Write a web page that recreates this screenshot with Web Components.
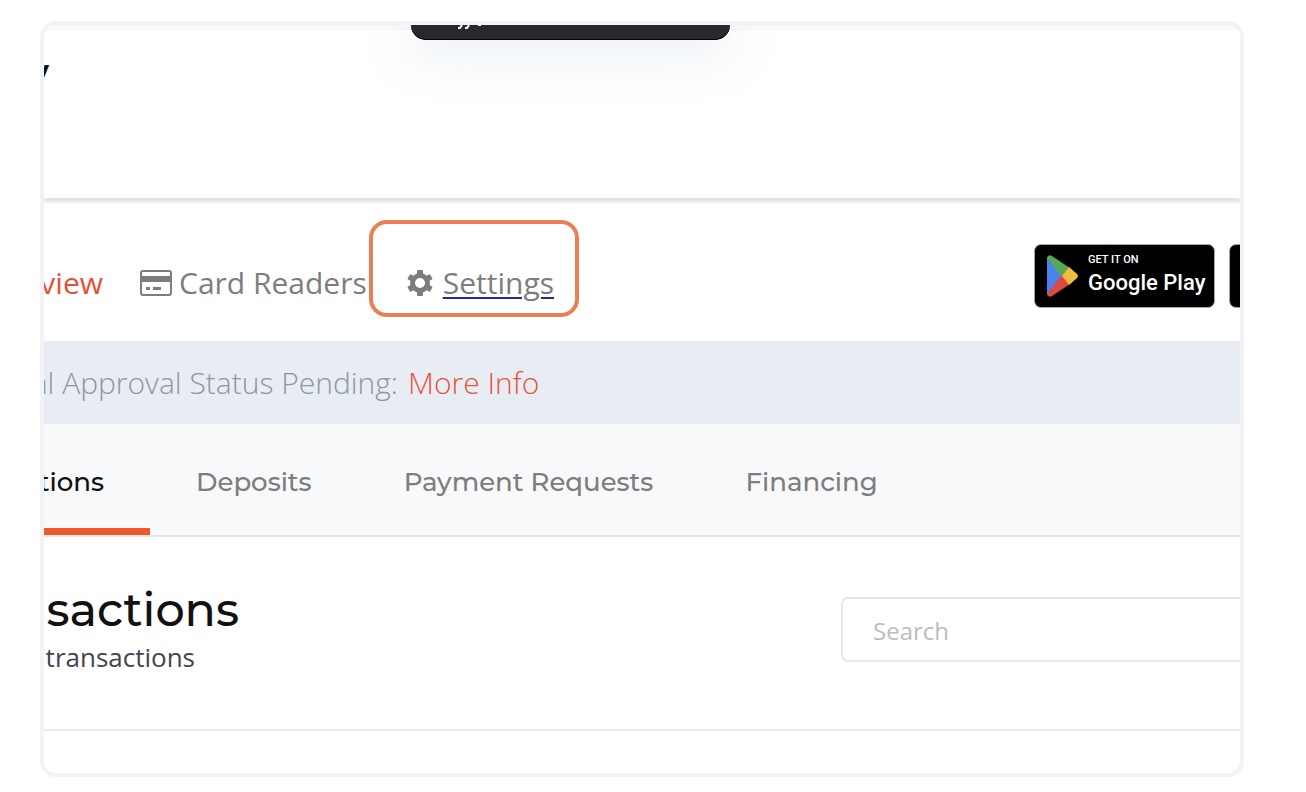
<!DOCTYPE html>
<html lang="en">
<head>
<meta charset="utf-8">
<meta name="viewport" content="width=device-width, initial-scale=1">
<title>Transactions</title>
<style>
    body {
        margin: 0;
        background: #fff;
        font-family: "Open Sans", "Noto Sans", sans-serif;
        --heading-font: Montserrat, Inter, sans-serif;
        --accent: #f0592a;
    }
</style>
</head>
<body>
<screen-frame>
    <top-header></top-header>
    <account-nav></account-nav>
    <status-notice href="#info" link="More Info">al Approval Status Pending:</status-notice>
    <tab-bar></tab-bar>
    <list-heading>
        <span slot="title">sactions</span>
        <span slot="text">transactions</span>
    </list-heading>
</screen-frame>

<script>
class ScreenFrame extends HTMLElement {
    constructor() {
        super()
        this.attachShadow({mode: 'open'})
        this.shadowRoot.innerHTML = /*html*/`
            <style>
                :host {
                    display: block;
                    padding: 21px 62px 15px 40px;
                }
                .frame {
                    border: 4px solid #f3f2f7;
                    border-radius: 16px;
                    overflow: hidden;
                    background: #fff;
                }
            </style>
            <main class="frame"><slot></slot></main>
        `
    }
}

class TopHeader extends HTMLElement {
    constructor() {
        super()
        this.attachShadow({mode: 'open'})
        this.shadowRoot.innerHTML = /*html*/`
            <style>
                :host {
                    display: block;
                    position: relative;
                    box-sizing: border-box;
                    height: 173px;
                    margin-bottom: 6px;
                    border-top: 5px solid #f8f9fc;
                    box-shadow: 0 4px 3px #e2e2e2;
                }
                .name {
                    display: flex;
                    justify-content: flex-end;
                    width: 5px;
                    margin: 0;
                    padding-top: 24px;
                    font: 700 30px/36px var(--heading-font);
                    color: #111;
                }
                .toast {
                    position: absolute;
                    top: -5px;
                    left: 367px;
                    width: 319px;
                    height: 15px;
                    border-radius: 0 0 18px 18px;
                    background: #29282d;
                    box-shadow: 0 8px 48px 4px rgba(130, 165, 190, .25), inset 0 -1px 0 #000;
                }
                .toast svg {
                    display: block;
                    margin-left: 46px;
                }
            </style>
            <p class="name">y</p>
            <div class="toast">
                <svg width="28" height="4" fill="none" stroke="#fff" stroke-width="2">
                    <path d="M5 0L3 3H1M12 0L10 3H8M21 0H24"/>
                </svg>
            </div>
        `
    }
}

const icons = {
    card: /*html*/`
        <svg width="32" height="28" viewBox="0 0 32 28" aria-hidden="true">
            <rect x="1" y="2" width="30" height="24" rx="2" fill="none" stroke="#7d7d7d" stroke-width="2"/>
            <path fill="#7d7d7d" d="M1 7h30v6H1zM6 18h4v3H6zM13 18h8v3h-8z"/>
        </svg>`,
    gear: /*html*/`
        <svg width="32" height="28" viewBox="-16 -14 32 28" aria-hidden="true">
            <g fill="#7d7d7d">
                <rect x="-3" y="-13" width="6" height="26" rx="1"/>
                <rect x="-3" y="-13" width="6" height="26" rx="1" transform="rotate(60)"/>
                <rect x="-3" y="-13" width="6" height="26" rx="1" transform="rotate(120)"/>
                <circle r="10"/>
            </g>
            <circle r="5" fill="#fff"/>
        </svg>`
}

class NavItem extends HTMLElement {
    connectedCallback() {
        this.attachShadow({mode: 'open'})
        this.shadowRoot.innerHTML = /*html*/`
            <style>
                :host { display: block; }
                a {
                    display: flex;
                    position: relative;
                    align-items: center;
                    gap: 7px;
                    font-size: 30px;
                    line-height: 40px;
                    color: #7d7d7d;
                    text-decoration: none;
                    white-space: nowrap;
                }
                :host([active]) a { color: #e0523a; }
                :host([marked]) span {
                    text-decoration: underline 2px #1c2a9c;
                    text-underline-offset: 3px;
                }
                :host([marked]) a::after {
                    content: "";
                    position: absolute;
                    inset: -43px -25px -14px -35px;
                    border: 4px solid #e97f53;
                    border-radius: 18px;
                }
                svg { flex: none; }
            </style>
            <a href="#">${icons[this.getAttribute('icon')] || ''}<span><slot></slot></span></a>
        `
    }
}

class StoreBadge extends HTMLElement {
    constructor() {
        super()
        this.attachShadow({mode: 'open'})
        this.shadowRoot.innerHTML = /*html*/`
            <style>
                :host { display: block; }
                a {
                    display: flex;
                    align-items: center;
                    gap: 10px;
                    box-sizing: border-box;
                    width: 181px;
                    height: 64px;
                    padding-left: 12px;
                    border: 1px solid #a6a6a6;
                    border-radius: 7px;
                    background: #000;
                    color: #fff;
                    text-decoration: none;
                    white-space: nowrap;
                }
            </style>
            <a href="#"><slot></slot></a>
        `
    }
}

class AccountNav extends HTMLElement {
    constructor() {
        super()
        this.attachShadow({mode: 'open'})
        this.shadowRoot.innerHTML = /*html*/`
            <style>
                :host { display: block; }
                nav {
                    display: flex;
                    align-items: center;
                    height: 137px;
                }
                .links {
                    display: flex;
                    gap: 37px;
                    padding-top: 20px;
                }
                .first {
                    display: flex;
                    justify-content: flex-end;
                    width: 59px;
                    flex: none;
                }
                .stores {
                    display: flex;
                    gap: 14px;
                    margin: 6px -170px 0 auto;
                }
                .label {
                    display: flex;
                    flex-direction: column;
                    font-family: Roboto, sans-serif;
                    font-weight: 500;
                }
                small {
                    font-size: 11px;
                    line-height: 14px;
                }
                b {
                    font-size: 22px;
                    font-weight: 500;
                    line-height: 32px;
                }
            </style>
            <nav>
                <div class="links">
                    <div class="first"><nav-item active>view</nav-item></div>
                    <nav-item icon="card">Card Readers</nav-item>
                    <nav-item icon="gear" marked>Settings</nav-item>
                </div>
                <div class="stores">
                    <store-badge>
                        <svg width="31" height="42" viewBox="0 0 31 42" aria-hidden="true">
                            <path fill="#4c82ee" d="M0 2L16 21 0 40z"/>
                            <path fill="#56a956" d="M0 3Q1-1 5 1L23 13 15 22 0 3z"/>
                            <path fill="#dc4b3e" d="M0 39Q1 43 5 41L23 29 15 20 0 39z"/>
                            <path fill="#f3bc3e" d="M22 12L29 18Q33 21 29 24L22 30 15 21z"/>
                        </svg>
                        <span class="label"><small>GET IT ON</small><b>Google Play</b></span>
                    </store-badge>
                    <store-badge></store-badge>
                </div>
            </nav>
        `
    }
}

class StatusNotice extends HTMLElement {
    connectedCallback() {
        this.attachShadow({mode: 'open'})
        this.shadowRoot.innerHTML = /*html*/`
            <style>
                :host {
                    display: flex;
                    gap: 10px;
                    background: #e8edf4;
                    font-size: 30px;
                    font-weight: 300;
                    line-height: 83px;
                    color: #8f95a5;
                    white-space: nowrap;
                }
                .text {
                    display: flex;
                    justify-content: flex-end;
                    width: 354px;
                }
                a {
                    color: #e8523c;
                    text-decoration: none;
                }
            </style>
            <span class="text"><slot></slot></span>
            <a href="${this.getAttribute('href')}">${this.getAttribute('link')}</a>
        `
    }
}

class TabBar extends HTMLElement {
    data = ['tions', 'Deposits', 'Payment Requests', 'Financing']

    connectedCallback() {
        this.attachShadow({mode: 'open'})
        this.shadowRoot.innerHTML = /*html*/`
            <style>
                :host {
                    display: flex;
                    height: 111px;
                    border-bottom: 2px solid #e6e7eb;
                    background: #f8f9fb;
                }
                button {
                    flex: none;
                    padding: 12px 46px 0;
                    border: 0;
                    border-bottom: 7px solid transparent;
                    background: none;
                    font: 500 26px/32px var(--heading-font);
                    color: #7d7d7d;
                    white-space: nowrap;
                }
                button[aria-selected="true"] {
                    display: flex;
                    align-items: center;
                    justify-content: flex-end;
                    width: 106px;
                    padding-left: 0;
                    border-color: var(--accent);
                    color: #111;
                }
            </style>
            ${this.data.map((name, i) => /*html*/`
                <button type="button" role="tab" aria-selected="${i === 0}">${name}</button>
            `).join('')}
        `
        this.setAttribute('role', 'tablist')
    }
}

class ListHeading extends HTMLElement {
    constructor() {
        super()
        this.attachShadow({mode: 'open'})
        this.shadowRoot.innerHTML = /*html*/`
            <style>
                :host { display: block; }
                .row {
                    display: flex;
                    justify-content: space-between;
                    height: 192px;
                    border-bottom: 2px solid #e9e9ec;
                }
                .texts {
                    padding-top: 44px;
                    white-space: nowrap;
                }
                h1, p {
                    display: flex;
                    justify-content: flex-end;
                    margin: 0;
                }
                h1 {
                    width: 195px;
                    font: 500 46px/58px var(--heading-font);
                    color: #111;
                }
                p {
                    width: 151px;
                    font-size: 26px;
                    line-height: 36px;
                    color: #44444f;
                }
                label {
                    width: 399px;
                    padding-top: 60px;
                }
                input {
                    box-sizing: border-box;
                    width: 440px;
                    height: 65px;
                    padding: 2px 30px 0;
                    border: 2px solid #e6e6eb;
                    border-radius: 7px;
                    font: 24px/32px "Open Sans", sans-serif;
                    color: #333;
                    outline: 0;
                }
                input::placeholder { color: #bdbdbd; }
                .list { height: 42px; }
            </style>
            <div class="row">
                <div class="texts">
                    <h1><slot name="title"></slot></h1>
                    <p><slot name="text"></slot></p>
                </div>
                <label><input type="search" placeholder="Search" aria-label="Search"></label>
            </div>
            <div class="list"></div>
        `
    }
}

customElements.define('screen-frame', ScreenFrame)
customElements.define('top-header', TopHeader)
customElements.define('nav-item', NavItem)
customElements.define('store-badge', StoreBadge)
customElements.define('account-nav', AccountNav)
customElements.define('status-notice', StatusNotice)
customElements.define('tab-bar', TabBar)
customElements.define('list-heading', ListHeading)
</script>
</body>
</html>
